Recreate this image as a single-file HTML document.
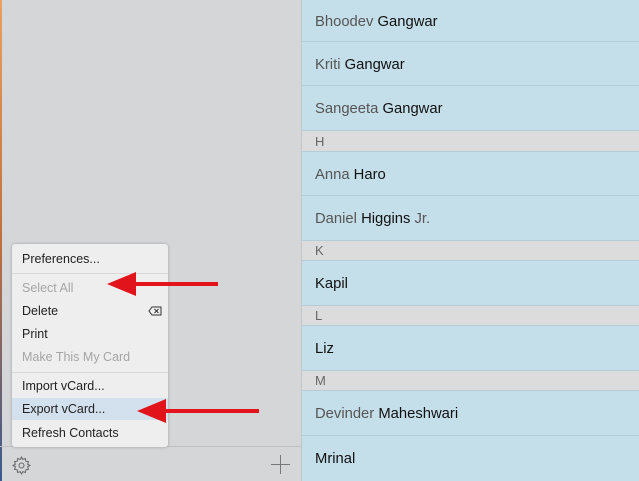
<!DOCTYPE html><html><head><style>
body{margin:0;width:639px;height:481px;overflow:hidden;position:relative;background:#d6d7d9;font-family:"Liberation Sans",sans-serif}
.l{position:absolute;left:0;top:0;width:301px;height:481px;background:#d5d6d8;border-right:1px solid #c4c6c8}
.edge{position:absolute;left:0;top:0;width:2px;height:481px;background:linear-gradient(#e8a060,#c07040 50%,#3a5a90)}
.r{position:absolute;left:302px;top:0;width:337px;height:481px;background:#c5dfea}
.row{position:absolute;left:0;width:337px;border-bottom:1px solid #b3cdd9;font-size:14.8px;color:#111;box-sizing:border-box;padding-left:13px;padding-top:3px}
.row span{color:#555}
.hd{position:absolute;left:0;width:337px;background:#dddcdc;font-size:13px;color:#666;padding-left:13px;box-sizing:border-box;border-bottom:1px solid #b3cdd9;padding-top:1px}
.menu{position:absolute;left:12px;top:244px;width:156px;height:203px;background:#eeeeee;box-shadow:0 0 3px rgba(0,0,0,.25);border-radius:3px;font-size:12.5px;color:#222}
.mi{position:absolute;left:10px}
.dis{color:#a5a5a5}
.sep{position:absolute;left:0;width:156px;height:1px;background:#d8d8d8}
.bar{position:absolute;left:0;top:446px;width:301px;height:1px;background:#c0c0c0}
</style></head><body>
<div class="l"></div><div class="edge"></div><div class="bar"></div>
<div class="r">
<div class="row" style="top:0;height:42px;line-height:38px"><span>Bhoodev</span> Gangwar</div>
<div class="row" style="top:42px;height:44px;line-height:40px"><span>Kriti</span> Gangwar</div>
<div class="row" style="top:86px;height:45px;line-height:41px"><span>Sangeeta</span> Gangwar</div>
<div class="hd" style="top:131px;height:21px;line-height:19px">H</div>
<div class="row" style="top:152px;height:44px;line-height:40px"><span>Anna</span> Haro</div>
<div class="row" style="top:196px;height:45px;line-height:41px"><span>Daniel</span> Higgins <span>Jr.</span></div>
<div class="hd" style="top:241px;height:20px;line-height:18px">K</div>
<div class="row" style="top:261px;height:45px;line-height:41px">Kapil</div>
<div class="hd" style="top:306px;height:20px;line-height:18px">L</div>
<div class="row" style="top:326px;height:45px;line-height:41px">Liz</div>
<div class="hd" style="top:371px;height:20px;line-height:18px">M</div>
<div class="row" style="top:391px;height:45px;line-height:41px"><span>Devinder</span> Maheshwari</div>
<div class="row" style="top:436px;height:45px;line-height:41px;border:0">Mrinal</div>
</div>
<div class="menu">
<div class="mi" style="top:8px">Preferences...</div>
<div class="sep" style="top:29px"></div>
<div class="mi dis" style="top:37px">Select All</div>
<div class="mi" style="top:60px">Delete</div>
<svg style="position:absolute;left:136px;top:62px" width="14" height="10" viewBox="0 0 14 10"><path d="M4 1H13V9H4L1 5Z" fill="none" stroke="#333"/><path d="M6.5 3l4 4M10.5 3l-4 4" stroke="#333"/></svg>
<div class="mi" style="top:83px">Print</div>
<div class="mi dis" style="top:106px">Make This My Card</div>
<div class="sep" style="top:128px"></div>
<div class="mi" style="top:135px">Import vCard...</div>
<div style="position:absolute;left:0;top:154px;width:156px;height:22px;background:#d2e1ed"></div>
<div class="mi" style="top:158px">Export vCard...</div>
<div class="mi" style="top:182px">Refresh Contacts</div>
</div>
<svg style="position:absolute;left:11px;top:455px" width="21" height="21" viewBox="0 0 21 21"><path d="M10.5 2l1.3 2.4 2.6-.9.4 2.7 2.7.4-.9 2.6 2.4 1.3-2.4 1.3.9 2.6-2.7.4-.4 2.7-2.6-.9-1.3 2.4-1.3-2.4-2.6.9-.4-2.7-2.7-.4.9-2.6L2 10.5l2.4-1.3-.9-2.6 2.7-.4.4-2.7 2.6.9Z" fill="none" stroke="#666"/><circle cx="10.5" cy="10.5" r="2.5" fill="none" stroke="#666"/></svg>
<svg style="position:absolute;left:270px;top:454px" width="21" height="21"><path d="M10.5 1v19M1 10.5h19" stroke="#777"/></svg>
<svg style="position:absolute;left:0;top:0" width="639" height="481"><g fill="#e0141a"><rect x="128" y="282" width="90" height="4"/><path d="M107 284L136 272V296Z"/><rect x="158" y="409" width="101" height="4"/><path d="M137 411L166 399V423Z"/></g></svg>
</body></html>
